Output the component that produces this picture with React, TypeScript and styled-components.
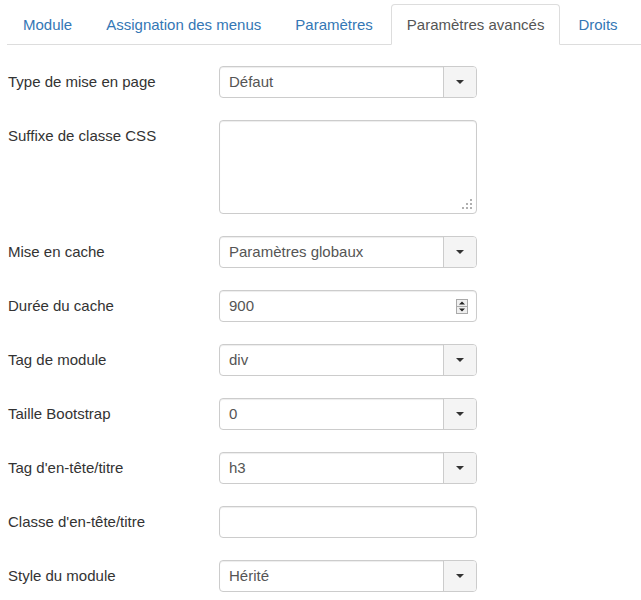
import React from "react"
import styled, { createGlobalStyle } from "styled-components"

const GlobalStyle = createGlobalStyle`
    html, body {
        margin: 0;
        padding: 0;
        background: #fff;
    }
    body {
        font-family: "Liberation Sans", Arial, sans-serif;
        font-size: 15px;
        color: #333;
    }
`

type FieldKind = "select" | "number" | "text" | "textarea"

const tabs = [
    "Module",
    "Assignation des menus",
    "Paramètres",
    "Paramètres avancés",
    "Droits"
]

const fields: { label: string; kind: FieldKind; value?: string }[] = [
    { label: "Type de mise en page", kind: "select", value: "Défaut" },
    { label: "Suffixe de classe CSS", kind: "textarea" },
    { label: "Mise en cache", kind: "select", value: "Paramètres globaux" },
    { label: "Durée du cache", kind: "number", value: "900" },
    { label: "Tag de module", kind: "select", value: "div" },
    { label: "Taille Bootstrap", kind: "select", value: "0" },
    { label: "Tag d'en-tête/titre", kind: "select", value: "h3" },
    { label: "Classe d'en-tête/titre", kind: "text" },
    { label: "Style du module", kind: "select", value: "Hérité" }
]

const Caret = () => (
    <svg width="8" height="4" viewBox="0 0 8 4">
        <path d="M0 0 L8 0 L4 4 Z" fill="#333" />
    </svg>
)

const Spinner = () => (
    <svg width="12" height="15" viewBox="0 0 12 15">
        <rect x="0.5" y="0.5" width="11" height="14" fill="#efefef" stroke="#a9a9a9" />
        <line x1="0.5" y1="7.5" x2="11.5" y2="7.5" stroke="#a9a9a9" />
        <path d="M3 5.5 L9 5.5 L6 2.5 Z" fill="#222" />
        <path d="M3 9.5 L9 9.5 L6 12.5 Z" fill="#222" />
    </svg>
)

const Grip = () => (
    <svg width="11" height="11" viewBox="0 0 11 11">
        <rect x="8" y="0" width="2" height="2" fill="#b0b0b0" />
        <rect x="4" y="4" width="2" height="2" fill="#b0b0b0" />
        <rect x="8" y="4" width="2" height="2" fill="#b0b0b0" />
        <rect x="0" y="8" width="2" height="2" fill="#b0b0b0" />
        <rect x="4" y="8" width="2" height="2" fill="#b0b0b0" />
        <rect x="8" y="8" width="2" height="2" fill="#b0b0b0" />
    </svg>
)

const renderControl = (kind: FieldKind, value?: string) => {
    if (kind === "select")
        return (
            <Box>
                <Value>{value}</Value>
                <DropButton>
                    <Caret />
                </DropButton>
            </Box>
        )
    if (kind === "number")
        return (
            <Box>
                <Value>{value}</Value>
                <SpinHolder>
                    <Spinner />
                </SpinHolder>
            </Box>
        )
    if (kind === "textarea")
        return (
            <AreaBox>
                <Grip />
            </AreaBox>
        )
    return <Box />
}

const App = () => {
    return (
        <Page>
            <GlobalStyle />
            <TabList>
                {tabs.map(t => (
                    <Tab key={t} active={t === "Paramètres avancés"}>
                        {t}
                    </Tab>
                ))}
            </TabList>
            <Form>
                {fields.map(f => (
                    <React.Fragment key={f.label}>
                        <Label>{f.label}</Label>
                        {renderControl(f.kind, f.value)}
                    </React.Fragment>
                ))}
            </Form>
        </Page>
    )
}

export default App

const Page = styled.div`
    padding: 4px 0 0 7px;
`

const TabList = styled.div`
    display: flex;
    border-bottom: 1px solid #ddd;
    height: 40px;
`

const Tab = styled.div<{ active?: boolean }>`
    box-sizing: border-box;
    height: 41px;
    padding: 0 15px;
    margin-right: 2px;
    margin-bottom: -1px;
    line-height: 39px;
    border: 1px solid ${p => (p.active ? "#ddd" : "transparent")};
    border-bottom-color: transparent;
    border-radius: 4px 4px 0 0;
    background: ${p => (p.active ? "#fff" : "transparent")};
    color: ${p => (p.active ? "#555" : "#3477b5")};
    white-space: nowrap;
`

const Form = styled.div`
    display: grid;
    grid-template-columns: 212px 258px;
    row-gap: 22px;
    margin-top: 21px;
    align-items: start;
`

const Label = styled.div`
    line-height: 32px;
    padding-left: 1px;
    color: #333;
`

const Box = styled.div`
    box-sizing: border-box;
    display: flex;
    align-items: stretch;
    height: 32px;
    border: 1px solid #ccc;
    border-radius: 4px;
    box-shadow: inset 0 1px 1px rgba(0, 0, 0, 0.075);
    background: #fff;
    overflow: hidden;
`

const Value = styled.div`
    flex: 1;
    padding-left: 9px;
    line-height: 30px;
    color: #555;
`

const DropButton = styled.div`
    width: 32px;
    display: flex;
    align-items: center;
    justify-content: center;
    border-left: 1px solid #ccc;
    background: #f4f4f4;
`

const SpinHolder = styled.div`
    display: flex;
    align-items: center;
    padding-right: 8px;
`

const AreaBox = styled(Box)`
    height: 94px;
    align-items: flex-end;
    justify-content: flex-end;
    padding: 0 3px 3px 0;
`
